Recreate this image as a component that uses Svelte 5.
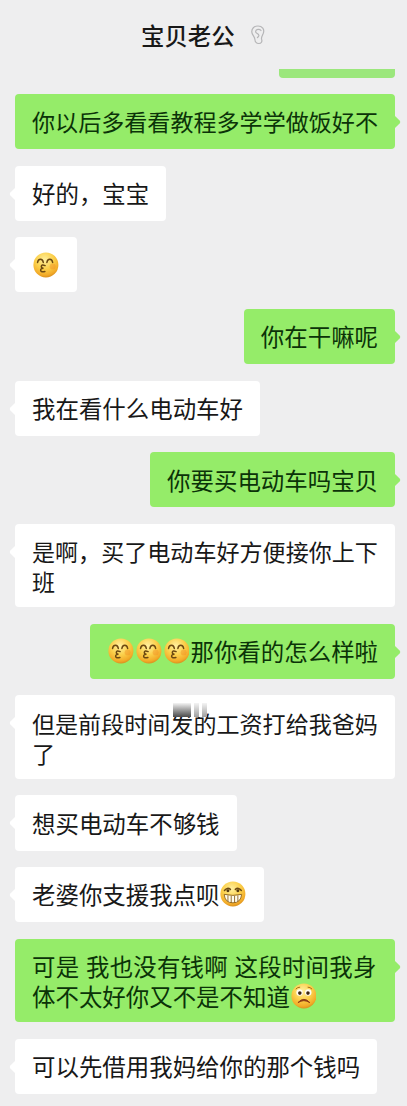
<script lang="ts">
	type Part = { text: string } | { emoji: 'kiss' | 'grin' | 'sad' };
	type Message = {
		mine: boolean;
		lines: Part[][];
		tight?: boolean;
		spaced?: boolean;
		smudge?: boolean;
	};

	const messages: Message[] = [
		{ mine: true, tight: true, lines: [[{ text: '你以后多看看教程多学学做饭好不' }]] },
		{ mine: false, lines: [[{ text: '好的，宝宝' }]] },
		{ mine: false, lines: [[{ emoji: 'kiss' }]] },
		{ mine: true, lines: [[{ text: '你在干嘛呢' }]] },
		{ mine: false, lines: [[{ text: '我在看什么电动车好' }]] },
		{ mine: true, lines: [[{ text: '你要买电动车吗宝贝' }]] },
		{
			mine: false,
			tight: true,
			lines: [[{ text: '是啊，买了电动车好方便接你上下' }], [{ text: '班' }]],
		},
		{
			mine: true,
			lines: [[{ emoji: 'kiss' }, { emoji: 'kiss' }, { emoji: 'kiss' }, { text: '那你看的怎么样啦' }]],
		},
		{
			mine: false,
			tight: true,
			smudge: true,
			lines: [[{ text: '但是前段时间发的工资打给我爸妈' }], [{ text: '了' }]],
		},
		{ mine: false, lines: [[{ text: '想买电动车不够钱' }]] },
		{ mine: false, lines: [[{ text: '老婆你支援我点呗' }, { emoji: 'grin' }]] },
		{
			mine: true,
			spaced: true,
			lines: [
				[{ text: '可是 我也没有钱啊 这段时间我身' }],
				[{ text: '体不太好你又不是不知道' }, { emoji: 'sad' }],
			],
		},
		{ mine: false, lines: [[{ text: '可以先借用我妈给你的那个钱吗' }]] },
	];
</script>

<svg class="defs" width="0" height="0" aria-hidden="true">
	<defs>
		<radialGradient id="face" cx="45%" cy="30%" r="72%">
			<stop offset="0" stop-color="#fff0a0" />
			<stop offset="0.5" stop-color="#fbd04b" />
			<stop offset="0.85" stop-color="#f2aa28" />
			<stop offset="1" stop-color="#d68c1c" />
		</radialGradient>
	</defs>
</svg>

<div class="screen">
	<header>
		<h1>宝贝老公</h1>
		<svg class="ear" width="16" height="20" viewBox="0 0 16 20">
			<path d="M13.2 8.5C15 4 12 1 8 1 4 1 1.6 3.6 1.8 7c.2 3.2 2.7 4 3 7 .2 2.800 1.600 4.500 4 4.500 2.600 0 3.600-2 2.800-4.200-.6-1.800 .6-3.600 1.600-5.800Z" />
			<path d="M11 5.500C9.500 3.600 6 4 5.600 6.300c-.3 1.800 1.800 2 2.800 3 1.300 1.300-.2 2.600-1 3.400" />
		</svg>
	</header>

	<main>
		<div class="cut-bubble"></div>
		{#each messages as message}
			<div class="row" class:mine={message.mine}>
				<div
					class="bubble"
					class:double={message.lines.length > 1}
					class:tight={message.tight}
					class:spaced={message.spaced}
				>
					<svg class="tail" width="8" height="14" viewBox="0 0 8 14">
						<path d="M0 0L5.6 5.5Q7 7 5.6 8.5L0 14Z" />
					</svg>
					{#each message.lines as line}
						<div class="line">
							{#each line as part}
								{#if 'text' in part}
									<span>{part.text}</span>
								{:else}
									<svg class="emoji" viewBox="0 0 26 26">
										<circle cx="13" cy="13" r="12.6" fill="url(#face)" />
										{#if part.emoji === 'kiss'}
											<g class="ink">
												<path d="M4.6 10.600q.4-3.400 2.900-3.400t2.900 3.400" />
												<path d="M14 10.600q.4-3.400 2.900-3.400t2.900 3.400" />
												<path d="M12.200 13.700q-3.700-1.400-3.800.8 0 1.700 2.200 1.800-3 0-2.900 2.200.3 2.300 4.300 1.100" />
											</g>
											<circle cx="19.8" cy="14.5" r="3" fill="#f18a22" opacity="0.4" />
										{:else if part.emoji === 'grin'}
											<g class="ink">
												<path d="M4.5 9.500q3-3.600 6-1" />
												<path d="M15.500 8.500q3-2.600 6 1" />
											</g>
											<circle cx="8" cy="9.8" r="1.5" fill="#513710" />
											<circle cx="18" cy="9.8" r="1.5" fill="#513710" />
											<path
												d="M4.200 13.500Q13 15.500 21.800 13.500 21 22 13 22T4.200 13.500Z"
												fill="#fffdf0"
												stroke="#8b601b"
												stroke-width="0.9"
											/>
											<path
												d="M8 14.500v6M11.300 15v7M14.700 15v7M18 14.500v6"
												stroke="#8b601b"
												stroke-width="0.9"
											/>
										{:else}
											<circle cx="8.6" cy="9.6" r="3.2" fill="#fffdf4" />
											<circle cx="17.4" cy="9.6" r="3.2" fill="#fffdf4" />
											<circle cx="8.9" cy="10.2" r="1.8" fill="#3b2410" />
											<circle cx="17.1" cy="10.2" r="1.8" fill="#3b2410" />
											<path d="M4.800 6.200q2-2.200 4.400-2M21.200 6.200q-2-2.200-4.400-2" class="brow" />
											<path d="M7 19.800q6-6.600 12 0-6-4-12 0Z" fill="#8f3d16" stroke="#8f3d16" />
										{/if}
									</svg>
								{/if}
							{/each}
						</div>
					{/each}
					{#if message.smudge}
						<div class="smudge"><i></i><i></i><i></i></div>
					{/if}
				</div>
			</div>
		{/each}
	</main>
</div>

<style>
	:global(body) {
		margin: 0;
		background: #eeeeef;
	}

	.defs {
		position: absolute;
	}

	.screen {
		width: 407px;
		height: 1106px;
		overflow: hidden;
		background: #eeeeef;
		font-family: 'Noto Sans CJK SC', sans-serif;
		color: #181818;
	}

	header {
		display: flex;
		align-items: center;
		box-sizing: border-box;
		height: 69px;
		padding: 1px 0 0 141px;
	}

	h1 {
		margin: 0;
		font-size: 23.4px;
		font-weight: 500;
		line-height: 66px;
	}

	.ear {
		margin-left: 15px;
		fill: none;
		stroke: #b5b5b7;
		stroke-width: 1.2;
		stroke-linecap: round;
	}

	main {
		display: flex;
		flex-direction: column;
		gap: 16.55px;
		padding: 0 12px 0 15px;
	}

	.cut-bubble {
		align-self: flex-end;
		width: 116px;
		height: 8.5px;
		border-radius: 0 0 4px 4px;
		background: #9be77c;
	}

	.row {
		display: flex;
	}

	.row.mine {
		justify-content: flex-end;
	}

	.bubble {
		position: relative;
		box-sizing: border-box;
		height: 55.1px;
		padding: 12.3px 17px 0;
		border-radius: 4px;
		background: #fff;
		font-size: 23.45px;
		line-height: 30px;
		white-space: nowrap;
	}

	.bubble.double {
		height: 83.4px;
	}

	.bubble.tight {
		font-size: 23.07px;
	}

	.bubble.spaced {
		width: 380px;
	}

	.bubble.spaced .line:nth-of-type(1) {
		letter-spacing: 0.22px;
		word-spacing: 1.2px;
	}

	.mine .bubble {
		background: #95ec69;
		color: #0b3308;
	}

	.line {
		display: flex;
		align-items: center;
		height: 30px;
	}

	.line span {
		white-space: pre;
	}

	.tail {
		position: absolute;
		top: 21px;
		left: -7px;
		transform: scaleX(-1);
		fill: #fff;
	}

	.mine .tail {
		right: -7px;
		left: auto;
		transform: none;
		fill: #95ec69;
	}

	.emoji {
		width: 25.8px;
		height: 25.8px;
		margin: 0 1.2px 0 0.8px;
		flex-shrink: 0;
	}

	.ink {
		fill: none;
		stroke: #6b4811;
		stroke-width: 1.5;
		stroke-linecap: round;
	}

	.brow {
		fill: none;
		stroke: #a86a18;
		stroke-width: 1;
	}

	.smudge {
		position: absolute;
		top: 8px;
		left: 158px;
		display: flex;
		gap: 3px;
		height: 14px;
		background: #fff;
	}

	.smudge i {
		width: 18px;
		background: linear-gradient(#f4f4f4, #8c8c8c 60%, #4c4c4c);
		filter: blur(0.7px);
	}

	.smudge i + i {
		width: 5px;
		background: linear-gradient(#f4f4f4, #a0a0a0);
	}
</style>
